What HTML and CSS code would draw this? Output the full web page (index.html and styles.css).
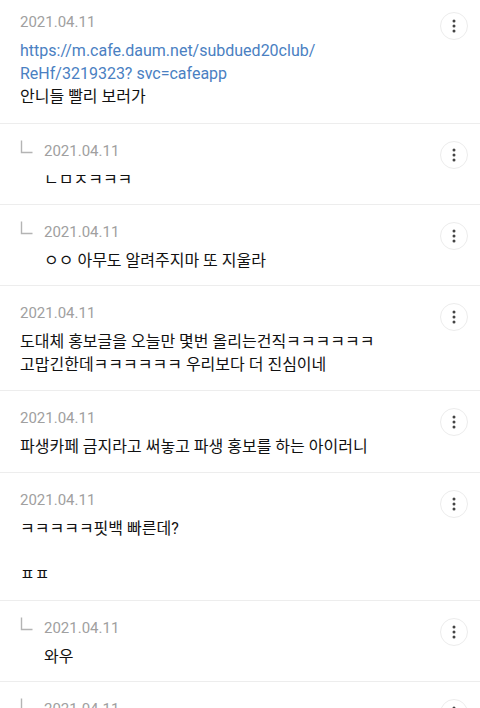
FILE: index.html
```html
<!DOCTYPE html>
<html lang="ko">
<head>
    <meta charset="UTF-8">
    <meta name="viewport" content="width=device-width, initial-scale=1.0">
    <title>댓글</title>
    <link rel="stylesheet" href="styles.css">
</head>
<body>
    <ul class="comment-list">
        <li class="comment">
            <div class="comment-body">
                <span class="date">2021.04.11</span>
                <p class="text"><a class="link" href="#">https://m.cafe.daum.net/subdued20club/<br>ReHf/3219323? svc=cafeapp</a><br>안니들 빨리 보러가</p>
            </div>
            <button class="more" aria-label="더보기">
                <svg width="4" height="14" viewBox="0 0 4 14"><circle cx="2" cy="2" r="1.5"/><circle cx="2" cy="7" r="1.5"/><circle cx="2" cy="12" r="1.5"/></svg>
            </button>
        </li>
        <li class="comment reply">
            <span class="reply-mark"><svg width="13" height="14" viewBox="0 0 13 14"><path d="M1.5 0.5V12.5H12.5" fill="none"/></svg></span>
            <div class="comment-body">
                <span class="date">2021.04.11</span>
                <p class="text">ㄴㅁㅈㅋㅋㅋ</p>
            </div>
            <button class="more" aria-label="더보기">
                <svg width="4" height="14" viewBox="0 0 4 14"><circle cx="2" cy="2" r="1.5"/><circle cx="2" cy="7" r="1.5"/><circle cx="2" cy="12" r="1.5"/></svg>
            </button>
        </li>
        <li class="comment reply">
            <span class="reply-mark"><svg width="13" height="14" viewBox="0 0 13 14"><path d="M1.5 0.5V12.5H12.5" fill="none"/></svg></span>
            <div class="comment-body">
                <span class="date">2021.04.11</span>
                <p class="text">ㅇㅇ 아무도 알려주지마 또 지울라</p>
            </div>
            <button class="more" aria-label="더보기">
                <svg width="4" height="14" viewBox="0 0 4 14"><circle cx="2" cy="2" r="1.5"/><circle cx="2" cy="7" r="1.5"/><circle cx="2" cy="12" r="1.5"/></svg>
            </button>
        </li>
        <li class="comment">
            <div class="comment-body">
                <span class="date">2021.04.11</span>
                <p class="text">도대체 홍보글을 오늘만 몇번 올리는건직ㅋㅋㅋㅋㅋㅋ<br>고맙긴한데ㅋㅋㅋㅋㅋㅋ 우리보다 더 진심이네</p>
            </div>
            <button class="more" aria-label="더보기">
                <svg width="4" height="14" viewBox="0 0 4 14"><circle cx="2" cy="2" r="1.5"/><circle cx="2" cy="7" r="1.5"/><circle cx="2" cy="12" r="1.5"/></svg>
            </button>
        </li>
        <li class="comment">
            <div class="comment-body">
                <span class="date">2021.04.11</span>
                <p class="text">파생카페 금지라고 써놓고 파생 홍보를 하는 아이러니</p>
            </div>
            <button class="more" aria-label="더보기">
                <svg width="4" height="14" viewBox="0 0 4 14"><circle cx="2" cy="2" r="1.5"/><circle cx="2" cy="7" r="1.5"/><circle cx="2" cy="12" r="1.5"/></svg>
            </button>
        </li>
        <li class="comment">
            <div class="comment-body">
                <span class="date">2021.04.11</span>
                <p class="text">ㅋㅋㅋㅋㅋ핏백 빠른데?<br><br>ㅍㅍ</p>
            </div>
            <button class="more" aria-label="더보기">
                <svg width="4" height="14" viewBox="0 0 4 14"><circle cx="2" cy="2" r="1.5"/><circle cx="2" cy="7" r="1.5"/><circle cx="2" cy="12" r="1.5"/></svg>
            </button>
        </li>
        <li class="comment reply">
            <span class="reply-mark"><svg width="13" height="14" viewBox="0 0 13 14"><path d="M1.5 0.5V12.5H12.5" fill="none"/></svg></span>
            <div class="comment-body">
                <span class="date">2021.04.11</span>
                <p class="text">와우</p>
            </div>
            <button class="more" aria-label="더보기">
                <svg width="4" height="14" viewBox="0 0 4 14"><circle cx="2" cy="2" r="1.5"/><circle cx="2" cy="7" r="1.5"/><circle cx="2" cy="12" r="1.5"/></svg>
            </button>
        </li>
        <li class="comment reply">
            <span class="reply-mark"><svg width="13" height="14" viewBox="0 0 13 14"><path d="M1.5 0.5V12.5H12.5" fill="none"/></svg></span>
            <div class="comment-body">
                <span class="date">2021.04.11</span>
                <p class="text">ㅋㅋ</p>
            </div>
            <button class="more" aria-label="더보기">
                <svg width="4" height="14" viewBox="0 0 4 14"><circle cx="2" cy="2" r="1.5"/><circle cx="2" cy="7" r="1.5"/><circle cx="2" cy="12" r="1.5"/></svg>
            </button>
        </li>
    </ul>
</body>
</html>
```

FILE: styles.css
```css
body {
    background-color: #fff;
    font-family: Roboto, "Noto Sans CJK KR", sans-serif;
    margin: 0;
    padding: 0;
    color: #111;
}
.comment-list {
    list-style: none;
    margin: 0;
    padding: 0;
}
.comment {
    display: flex;
    align-items: flex-start;
    padding: 16px 12px 14px 20px;
    border-bottom: 1px solid #ededed;
}
.comment:first-child {
    padding-top: 11px;
    padding-bottom: 15px;
}
.reply.comment {
    padding-bottom: 13px;
}
.reply-mark {
    width: 24px;
    flex-shrink: 0;
    margin-top: -1px;
}
.reply-mark svg {
    stroke: #b4b4b4;
    stroke-width: 1.4;
}
.comment-body {
    flex: 1;
    min-width: 0;
}
.date {
    display: block;
    font-size: 15px;
    line-height: 22px;
    color: #a0a0a0;
}
.text {
    margin: 6px 0 0;
    font-size: 16px;
    line-height: 23px;
    color: #111;
}
.link {
    color: #4a80c2;
    text-decoration: none;
}
.more {
    width: 28px;
    height: 28px;
    margin-top: 1px;
    padding: 0;
    border: 1px solid #ececec;
    border-radius: 50%;
    background-color: #fff;
    display: flex;
    align-items: center;
    justify-content: center;
    flex-shrink: 0;
}
.more svg {
    fill: #444;
}
```
